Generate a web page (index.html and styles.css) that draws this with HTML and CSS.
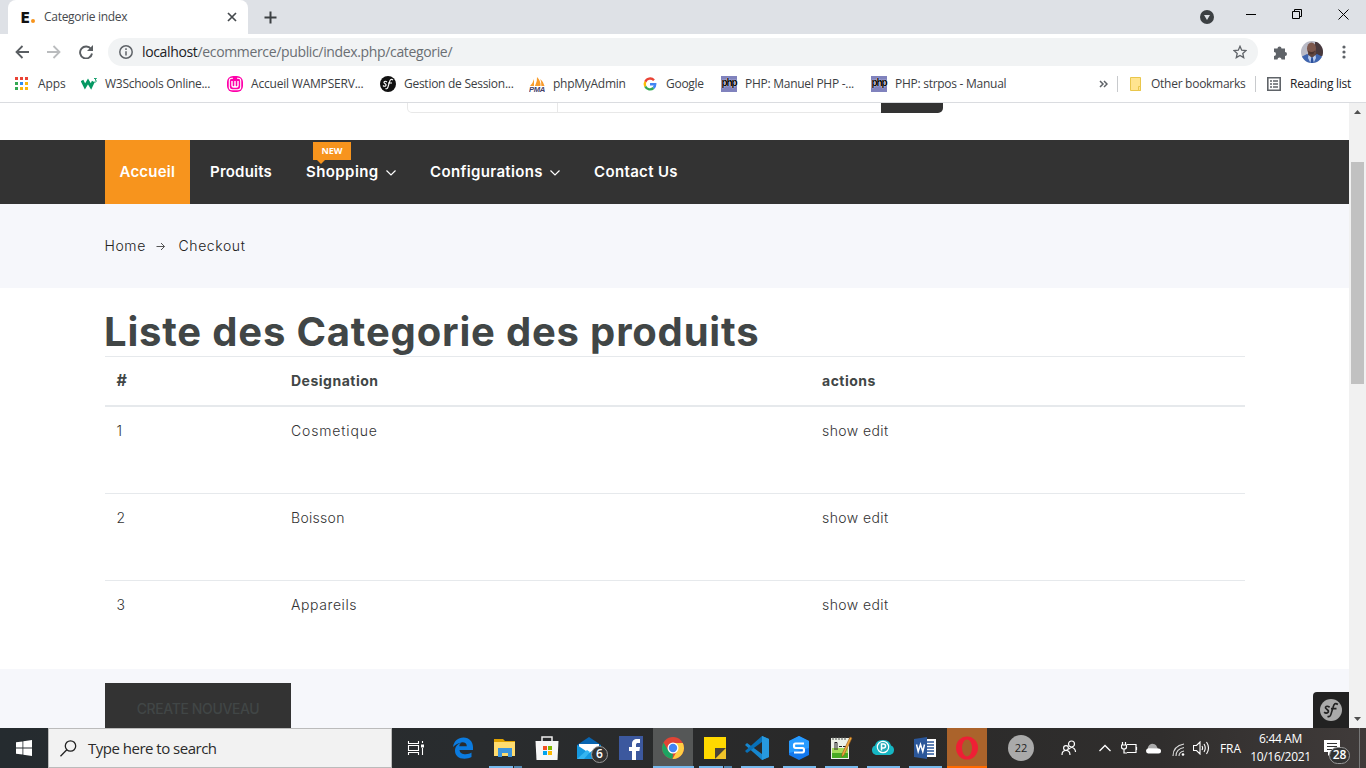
FILE: index.html
```
<!DOCTYPE html>
<html lang="fr">
<head>
<meta charset="utf-8">
<title>Categorie index</title>
<link rel="stylesheet" href="styles.css">
</head>
<body>
<header class="browser">
  <div class="tabstrip">
    <div class="tab">
      <span class="favicon">E<i></i></span><span class="tab-title">Categorie index</span>
      <svg class="tab-close" width="10" height="10" viewBox="0 0 10 10"><path d="M1 1l8 8M9 1L1 9" stroke="#45494d" stroke-width="1.7"/></svg>
    </div>
    <svg class="newtab" width="13" height="13" viewBox="0 0 13 13"><path d="M6.500 .5v12M.5 6.500h12" stroke="#3c4043" stroke-width="2"/></svg>
    <div class="window-controls">
      <svg width="14" height="14" viewBox="0 0 14 14"><circle cx="7" cy="7" r="7" fill="#3c4043"/><path d="M4 5h6L7 10z" fill="#dee1e6"/></svg>
      <svg class="min" width="10" height="10" viewBox="0 0 10 10"><path d="M0 5.500h10" stroke="#000"/></svg>
      <svg class="max" width="10" height="10" viewBox="0 0 10 10"><path d="M.5 2.500h7v7h-7zM2.500 2.500v-2h7v7h-2" stroke="#000" fill="none"/></svg>
      <svg class="close" width="11" height="11" viewBox="0 0 11 11"><path d="M.5 .5l10 10M10.500 .5l-10 10" stroke="#000"/></svg>
    </div>
  </div>
  <div class="toolbar">
    <svg width="14" height="14" viewBox="0 0 14 14"><path d="M14 7H1.500M7.500 1L1.500 7l6 6" stroke="#5a5e62" stroke-width="1.8" fill="none"/></svg>
    <svg width="14" height="14" viewBox="0 0 14 14"><path d="M0 7h12.500M6.500 1l6 6-6 6" stroke="#babcbe" stroke-width="1.800" fill="none"/></svg>
    <svg width="14" height="14" viewBox="0 0 14 14"><path d="M12 4A6 6 0 1 0 13 8.500" stroke="#5a5e62" stroke-width="1.900" fill="none"/><path d="M14 0v6H8z" fill="#5a5e62"/></svg>
    <div class="address">
      <svg width="14" height="14" viewBox="0 0 14 14"><circle cx="7" cy="7" r="6.200" fill="none" stroke="#5f6368" stroke-width="1.500"/><path d="M7 6.200v4.300M7 3.300v1.600" stroke="#5f6368" stroke-width="1.500"/></svg>
      <span class="url"><b>localhost</b>/ecommerce/public/index.php/categorie/</span>
      <svg class="star" width="14" height="14" viewBox="0 0 14 14"><path d="M7 1.300l1.700 3.900 4.300.4-3.200 2.800.9 4.200L7 10.400l-3.700 2.200.9-4.200L1 5.600l4.300-.4z" fill="none" stroke="#5f6368" stroke-width="1.300"/></svg>
    </div>
    <svg class="puzzle" width="15" height="15" viewBox="0 0 15 15"><path d="M1 3.500h3.500a2 2 0 1 1 4 0H12V7a2 2 0 1 1 0 4v3.500H8.500a2 2 0 0 0-4 0H1V11a2 2 0 0 0 0-4z" fill="#5f6368"/></svg>
    <svg class="avatar" width="22" height="22" viewBox="0 0 22 22"><defs><clipPath id="av"><circle cx="11" cy="11" r="11"/></clipPath></defs><g clip-path="url(#av)"><path d="M0 0h22v22H0z" fill="#b9bac6"/><path d="M14 1h8v14h-8z" fill="#48393d"/><path d="M0 16l6-3 5 2 5-2 6 3v6H0z" fill="#3f65af"/><path d="M7 11h8v3l-4 3-4-3z" fill="#60463f"/><ellipse cx="10.500" cy="7.500" rx="4.500" ry="6" fill="#7c574c"/><path d="M7 9.500q3.500 3 7 0-.5 4-3.500 4T7 9.500z" fill="#4b342f"/><path d="M7.500 14l3.500 3 3.500-3 .5 3-2.500 5h-3L7 17z" fill="#b9cbed"/><path d="M10.300 16.500h1.500l1 5.500H9.500z" fill="#294f9c"/></g></svg>
    <svg class="dots" width="4" height="14" viewBox="0 0 4 14"><g fill="#5f6368"><circle cx="2" cy="2" r="1.600"/><circle cx="2" cy="7" r="1.600"/><circle cx="2" cy="12" r="1.600"/></g></svg>
  </div>
  <nav class="bookmarks">
    <a class="bm bm-apps"><svg width="16" height="16" viewBox="0 0 16 16"><path d="M1 1h3v3H1zM6 1h3v3H6zM11 1h3v3h-3z" fill="#ea4335"/><path d="M1 6h3v3H1z" fill="#34a853"/><path d="M6 6h3v3H6z" fill="#2e8cf0"/><path d="M11 6h3v3h-3zM6 11h3v3H6zM11 11h3v3h-3z" fill="#fbb50b"/><path d="M1 11h3v3H1z" fill="#34a853"/></svg><span>Apps</span></a>
    <a class="bm bm-w3"><svg width="17" height="16" viewBox="0 0 17 16"><path d="M1 4.500l3 6 3-5 3 5 2.300-5" fill="none" stroke="#059862" stroke-width="3"/><path d="M13 2.500h2.500L14 4c2 0 2 2.500-.8 2" stroke="#059862" fill="none" stroke-width=".9"/></svg><span>W3Schools Online...</span></a>
    <a class="bm bm-wamp"><svg width="16" height="16" viewBox="0 0 16 16"><rect width="16" height="16" rx="6" fill="#f0a"/><path d="M6 2.300H5Q2.300 2.300 2.300 5v6q0 2.700 2.700 2.700h6q2.700 0 2.700-2.700V5Q13.700 2.300 11 2.300h-1" fill="none" stroke="#fff" stroke-width="1.100"/><path d="M5 5v4.500Q5 11 6.500 11T8 9.500V5v4.500Q8 11 9.500 11T11 9.500V5" fill="none" stroke="#fff" stroke-width="1.400"/></svg><span>Accueil WAMPSERV...</span></a>
    <a class="bm bm-sf"><svg width="16" height="16" viewBox="0 0 16 16"><circle cx="8" cy="8" r="8" fill="#111"/><path d="M7 6q-2-1.500-3 0c-.8 1.500 3 1.500 2 3.500q-1.500 1.500-3 0M13 4q-2.500-2-3.500 2L8 11q-.8 2.500-2.500 1.500M8 7h4" fill="none" stroke="#fff" stroke-width="1.100"/></svg><span>Gestion de Session...</span></a>
    <a class="bm bm-pma"><svg width="16" height="16" viewBox="0 0 16 16"><path d="M1 10Q4 7 5 3v7zM6 10Q8.500 5 8 1q4 4 3.500 9zM12.300 10q.3-4-1-7 3.500 3 4.200 7z" fill="#f89c2c"/><text x="0" y="15.500" class="pma" textLength="16" lengthAdjust="spacingAndGlyphs">PMA</text></svg><span>phpMyAdmin</span></a>
    <a class="bm bm-google"><svg width="16" height="16" viewBox="0 0 16 16"><g fill="none" stroke-width="2.400"><path d="M12 4.200A5.200 5.200 0 0 0 3.300 5.800" stroke="#ea4335"/><path d="M3.300 5.800a5.200 5.200 0 0 0 0 4.700" stroke="#fbbc05"/><path d="M3.300 10.500a5.200 5.200 0 0 0 8.200 1.500" stroke="#34a853"/><path d="M8 8.200h5.200a5.200 5.200 0 0 1-1.700 3.800" stroke="#4285f4"/></g></svg><span>Google</span></a>
    <a class="bm bm-php"><i class="php">php</i><span>PHP: Manuel PHP -...</span></a>
    <a class="bm bm-php2"><i class="php">php</i><span>PHP: strpos - Manual</span></a>
    <svg class="more" width="9" height="8" viewBox="0 0 9 8"><path d="M1 1l3 3-3 3M5 1l3 3-3 3" fill="none" stroke="#5f6368" stroke-width="1.500"/></svg>
    <i class="sep"></i>
    <a class="bm bm-other"><svg width="14" height="16" viewBox="0 0 14 16"><path d="M1.500 1.500h10v13h-10z" fill="#ffe48f" stroke="#e9c64b"/><path d="M9.500 10.500h2v4h-2z" fill="#ffe48f" stroke="#e9c64b"/></svg><span>Other bookmarks</span></a>
    <i class="sep"></i>
    <a class="bm bm-read"><svg width="14" height="14" viewBox="0 0 14 14"><path d="M.8 .8h12.400v12.400H.8z" fill="none" stroke="#5f6368" stroke-width="1.600"/><path d="M3 4h2M6 4h5M3 7h2M6 7h5M3 10h2M6 10h5" stroke="#5f6368" stroke-width="1.500"/></svg><span>Reading list</span></a>
  </nav>
</header>
<div class="viewport">
  <main class="page">
    <div class="searchrow"><div class="search"><div class="search-cat"></div><div class="search-input"></div><div class="search-btn"></div></div></div>
    <nav class="mainnav">
      <a class="active">Accueil</a>
      <a class="n-prod">Produits</a>
      <a class="n-shop">Shopping<svg width="12" height="8" viewBox="0 0 12 8"><path d="M1.500 1.500L6 6l4.500-4.500" fill="none" stroke="#fff" stroke-width="1.200"/></svg><em class="new">NEW</em></a>
      <a class="n-conf">Configurations<svg width="12" height="8" viewBox="0 0 12 8"><path d="M1.500 1.500L6 6l4.500-4.500" fill="none" stroke="#fff" stroke-width="1.200"/></svg></a>
      <a class="n-contact">Contact Us</a>
    </nav>
    <div class="breadcrumb"><span class="home">Home</span><svg width="10" height="9" viewBox="0 0 10 9"><path d="M.5 4.500h8M5 1l3.500 3.500L5 8" fill="none" stroke="#555" stroke-width="1"/></svg><span class="checkout">Checkout</span></div>
    <section class="content">
      <h1>Liste des Categorie des produits</h1>
      <table>
        <thead><tr><th class="c1"><span class="t-num">#</span></th><th class="c2">Designation</th><th>actions</th></tr></thead>
        <tbody>
          <tr><td>1</td><td><span class="t-cos">Cosmetique</span></td><td><a>show</a> <a>edit</a></td></tr>
          <tr><td>2</td><td><span class="t-boi">Boisson</span></td><td><a>show</a> <a>edit</a></td></tr>
          <tr><td>3</td><td><span class="t-app">Appareils</span></td><td><a>show</a> <a>edit</a></td></tr>
        </tbody>
      </table>
    </section>
    <div class="actions"><button class="create">CREATE NOUVEAU</button></div>
    <div class="sf-toolbar"><svg width="22" height="22" viewBox="0 0 16 16"><circle cx="8" cy="8" r="8" fill="#aaa"/><path d="M7 6q-2-1.500-3 0c-.8 1.500 3 1.500 2 3.500q-1.500 1.500-3 0M13 4q-2.500-2-3.500 2L8 11q-.8 2.500-2.500 1.500M8 7h4" fill="none" stroke="#222" stroke-width="1.200"/></svg></div>
  </main>
  <div class="scrollbar">
    <svg width="17" height="17" viewBox="0 0 17 17"><path d="M5 11l3.500-4 3.500 4z" fill="#505050"/></svg>
    <div class="thumb"></div>
    <svg width="17" height="17" viewBox="0 0 17 17"><path d="M5 6l3.500 4L12 6z" fill="#505050"/></svg>
  </div>
</div>
<footer class="taskbar">
  <div class="start"><svg width="16" height="16" viewBox="0 0 16 16"><path d="M0 2.300l6.500-.9v6.200H0zM7.300 1.300L16 0v7.600H7.300zM0 8.400h6.500v6.200L0 13.700zM7.300 8.400H16V16l-8.700-1.300z" fill="#fff"/></svg></div>
  <div class="tsearch"><svg width="17" height="17" viewBox="0 0 17 17"><circle cx="10.500" cy="6" r="5.200" fill="none" stroke="#222" stroke-width="1.300"/><path d="M6.800 9.800L.5 16.200" stroke="#222" stroke-width="1.300"/></svg><span>Type here to search</span></div>
  <div class="taskview"><svg width="17" height="16" viewBox="0 0 17 16"><path d="M1.500 1v2.500h10V1M1.500 5.500h10v5h-10zM1.500 15v-2.500h10V15M15.500 1v2M15.500 8v7" fill="none" stroke="#fff" stroke-width="1.100"/><path d="M14 4.500h3v3h-3z" fill="#fff"/></svg></div>
  <div class="app"><svg width="24" height="24" viewBox="0 0 24 24"><path d="M2 11C3 5 7 1.500 12.500 1.500 18.500 1.500 22 6 22 11v3H8.500c.3 3 3 4.200 6 4.200 2.500 0 4.600-.7 6-1.600v4.500c-2 1.100-4.500 1.700-7 1.700-6 0-9.500-3.500-9.500-8 0-4 2.500-6.600 6-8-1 1-1.500 2-1.700 3.400h7.500c0-2.600-1.600-4-4.500-4C7.500 7.200 4 8.600 2 11z" fill="#0b7bdf"/></svg></div>
  <div class="app run two"><svg width="24" height="24" viewBox="0 0 24 24"><path d="M1 3h9l2 2h10v5H1z" fill="#dfa100"/><path d="M1 6h21v14H1z" fill="#ffdc6e"/><path d="M5 21v-9h14v9h-4v-4H9v4z" fill="#3d95dc"/></svg></div>
  <div class="app"><svg width="24" height="26" viewBox="0 0 24 26"><path d="M7 7V2h10v5" fill="none" stroke="#eee" stroke-width="1.500"/><path d="M.5 6h23l-1 19H1.500z" fill="#f7f7f7"/><path d="M8 11h4v4H8z" fill="#f25022"/><path d="M13 11h4v4h-4z" fill="#7fba00"/><path d="M8 16h4v4H8z" fill="#00a4ef"/><path d="M13 16h4v4h-4z" fill="#ffb900"/></svg></div>
  <div class="app mail"><svg width="24" height="24" viewBox="0 0 24 24"><path d="M0 9L12 1l12 8v14H0z" fill="#0864b0"/><path d="M2 8h20v10H2z" fill="#fff"/><path d="M0 9l12 8 12-8v14H0z" fill="#1598df"/><path d="M0 23l10-9 3 2-6 7z" fill="#35b5f0"/></svg><b class="badge">6</b></div>
  <div class="app"><svg width="24" height="24" viewBox="0 0 24 24"><path d="M0 0h24v24H0z" fill="#3c589e"/><path d="M13 24v-9h-3v-4h3V8c0-3.500 2-5 5-5h3v4h-2c-1.300 0-2 .5-2 2v2h4l-.6 4H17v9z" fill="#fff"/></svg></div>
  <div class="app chrome"><svg width="24" height="24" viewBox="0 0 24 24"><circle cx="12" cy="12" r="11" fill="#e04435"/><path d="M2.500 6.500L7.500 15 12 18l-.5 5A11 11 0 0 1 2.500 6.500z" fill="#1da362"/><path d="M12 7h9.800A11 11 0 0 1 11.500 23L16.500 14z" fill="#ffce43"/><circle cx="12" cy="12" r="5.500" fill="#fff"/><circle cx="12" cy="12" r="4.200" fill="#4285f4"/></svg></div>
  <div class="app run two"><svg width="24" height="24" viewBox="0 0 24 24"><path d="M1 1h22v11l-11 11H1z" fill="#ffd900"/><path d="M12 12h11L12 23z" fill="#4a4438"/><path d="M23 12v11H12z" fill="#f0c329"/></svg></div>
  <div class="app run"><svg width="24" height="24" viewBox="0 0 24 24"><path d="M17 0l7 3v18l-7 3L0 9l2-2 15 11z" fill="#1787cf"/><path d="M17 0v6L2 17l-2-2z" fill="#0870b7"/><path d="M17 0l7 3v18l-7 3z" fill="#2799df"/></svg></div>
  <div class="app run"><svg width="24" height="24" viewBox="0 0 24 24"><path d="M12 0l10 5v14l-10 5-10-5V5z" fill="#1478ed"/><path d="M12 0l10 5v7L2 17V5z" fill="#279bff"/><path d="M17 7.500H8.500Q7 7.500 7 9.700T8.500 12h7q1.500 0 1.500 2.200t-1.500 2.300H7" fill="none" stroke="#fff" stroke-width="2.200"/></svg></div>
  <div class="app run"><svg width="24" height="24" viewBox="0 0 24 24"><path d="M2 2h18v21H2z" fill="#edf2e8"/><path d="M3 12h16v10H3z" fill="#a5dc5a"/><path d="M3 17h16v5H3z" fill="#48aa23"/><path d="M4 1v3M7 1v3M10 1v3M13 1v3M16 1v3" stroke="#555"/><path d="M6 6v8M6 6.500h2V14M10 10.500h3M14 10.500h3" stroke="#222" fill="none"/><path d="M21 1l2 1-8 17-2 2v-3z" fill="#efaa3c" stroke="#93541c" stroke-width=".6"/></svg></div>
  <div class="app run"><svg width="24" height="24" viewBox="0 0 24 24"><path d="M5 19a5 5 0 0 1-1-9.500C5 5 9 4 12 4s7 1 8 5.500A5 5 0 0 1 19 19z" fill="#16b6c3"/><circle cx="12" cy="11" r="5.700" fill="#24acb9" stroke="#fff" stroke-width="1.200"/><path d="M10.500 14.500V8h2q2 0 2 2t-2 2h-2" fill="none" stroke="#fff" stroke-width="1.500"/></svg></div>
  <div class="app run"><svg width="24" height="24" viewBox="0 0 24 24"><path d="M12 3h11v18H12z" fill="#fff"/><path d="M14 6h7M14 9h7M14 12h7M14 15h7M14 18h7" stroke="#2b579a" stroke-width="1.300"/><path d="M1 3l13-2v22L1 21z" fill="#2b579a"/><path d="M3.500 8.500l1.700 7 2.300-7 2.300 7 1.700-7" fill="none" stroke="#fff" stroke-width="1.500"/></svg></div>
  <div class="app opera"><svg width="24" height="24" viewBox="0 0 24 24"><ellipse cx="12" cy="12" rx="11" ry="11.500" fill="#ee1f35"/><ellipse cx="12" cy="12" rx="5" ry="8.500" fill="#a5602b"/></svg></div>
  <div class="tray">
    <b class="temp">22</b>
    <svg class="people" width="16" height="16" viewBox="0 0 16 16"><g fill="none" stroke="#fff" stroke-width="1.200"><circle cx="10.500" cy="4" r="3"/><circle cx="5" cy="8" r="2.400"/><path d="M1 15q0-4.500 4-4.500T9 15M8 9q3-3 5.500 0 1 1.300 1 3"/></g></svg>
    <svg class="chev" width="12" height="8" viewBox="0 0 12 8"><path d="M.5 7L6 1.500 11.500 7" fill="none" stroke="#fff" stroke-width="1.300"/></svg>
    <svg class="batt" width="17" height="12" viewBox="0 0 17 12"><path d="M6 2.500h9v8H6M15.500 5v3M1.500 0v3M4.500 0v3M.5 3h5v2q0 2-2.500 2T.5 5zM3 7v4h3" fill="none" stroke="#fff" stroke-width="1.200"/></svg>
    <svg class="cloud" width="17" height="11" viewBox="0 0 17 11"><path d="M3 7a4.500 4.500 0 0 1 9-3l2 4z" fill="#aaa"/><path d="M3 10.500a2.700 2.700 0 0 1 .5-5.300l10 .3a2.500 2.500 0 0 1 0 5z" fill="#fff"/></svg>
    <svg class="wifi" width="13" height="13" viewBox="0 0 13 13"><g fill="none" stroke="#ddd" stroke-width="1.100"><path d="M1 13Q1 3 12 1M4 13q0-7 8-8.500M7 13q0-4 5-5"/></g><circle cx="11" cy="11.500" r="1.300" fill="#fff"/></svg>
    <svg class="sound" width="17" height="14" viewBox="0 0 17 14"><path d="M.5 4.500h3l3.500-3.500v12L3.500 9.500h-3zM9 5q1.200 2 0 4M11 3q2.500 4 0 8M13.500 1q4 6 0 12" fill="none" stroke="#fff" stroke-width="1.100"/></svg>
    <span class="lang">FRA</span>
    <div class="clock"><span class="time">6:44 AM</span><span class="date">10/16/2021</span></div>
    <div class="notice"><svg width="17" height="16" viewBox="0 0 17 16"><path d="M0 0h16v12H8l-4 4v-4H0z" fill="#fff"/><path d="M3 3.500h10M3 6.500h10M3 9.500h6" stroke="#333"/></svg><b class="badge">28</b></div>
  </div>
</footer>
</body>
</html>
```
FILE: styles.css
```
* { box-sizing: border-box; }
body { margin: 0; width: 1366px; height: 768px; overflow: hidden; display: flex; flex-direction: column; font-family: "Open Sans", sans-serif; }
svg { display: block; flex: none; }
i, em { font-style: normal; }

/* Browser window */
.browser { height: 103px; border-bottom: 1px solid #dadce0; background: #fff; }
.tabstrip { height: 34px; background: #dee1e6; display: flex; align-items: center; }
.tab { width: 240px; height: 34px; margin-left: 8px; background: #fff; border-radius: 8px 8px 0 0; display: flex; align-items: center; padding: 0 11px 0 13px; font-size: 12px; color: #45494d; }
.favicon { width: 23px; font: 900 14px Inter, sans-serif; color: #111; display: flex; align-items: baseline; }
.favicon i { width: 4px; height: 4px; border-radius: 2px; background: #f7941d; margin-left: 1px; }
.tab-title { letter-spacing: -.28px; white-space: nowrap; padding-bottom: 2px; }
.tab-close { margin-left: auto; }
.newtab { margin-left: 16px; }
.window-controls { margin-left: auto; display: flex; align-items: center; padding-right: 17px; }
.window-controls .min { margin: -6px 0 0 32px; }
.window-controls .max { margin: -6px 0 0 36px; }
.window-controls .close { margin: -6px 0 0 36px; }
.toolbar { height: 36px; display: flex; align-items: center; padding-left: 15px; gap: 18px; }
.address { width: 1150px; height: 28px; margin-left: -3px; border-radius: 14px; background: #f1f3f4; display: flex; align-items: center; padding: 0 11px; }
.url { margin-left: 9px; padding-bottom: 2px; font-size: 14px; letter-spacing: -.35px; color: #6a6e73; white-space: nowrap; }
.url b { font-weight: 400; color: #202124; }
.star { margin-left: auto; }
.puzzle { margin-left: -3px; }
.avatar { margin-left: -5px; }
.dots { margin-left: 1px; }
.bookmarks { height: 28px; display: flex; align-items: center; padding-left: 14px; font-size: 12px; color: #3c4043; }
.bm { display: flex; align-items: center; gap: 8px; white-space: nowrap; flex: none; letter-spacing: -.27px; }
.bm span { padding-bottom: 2px; }
.bm-apps { width: 67px; }
.bm-apps span { letter-spacing: -.1px; }
.bm-w3 { width: 146px; gap: 7px; }
.bm-wamp { width: 153px; }
.bm-wamp span { letter-spacing: -.2px; }
.bm-sf { width: 149px; }
.bm-pma { width: 113px; }
.bm-google { width: 79px; }
.bm-php { width: 150px; }
.bm-php2 { width: 228px; }
.bm-other { margin-left: 11px; width: 126px; }
.bm-read { margin-left: 11px; gap: 9px; color: #202124; }
.sep { width: 1px; height: 16px; background: #c8cacd; flex: none; }
.more { margin-right: 9px; }
.pma { font: italic 700 6.500px "Liberation Sans", sans-serif; fill: #443f6a; }
.php { width: 16px; height: 16px; background: #8082bd; color: #000; font: 700 10px/14px "Liberation Sans", sans-serif; letter-spacing: -1.100px; text-align: center; text-shadow: 0 0 1px #fff, 0 0 1px #fff; }

/* Shop page */
.viewport { flex: 1; display: flex; min-height: 0; }
.page { flex: 1; position: relative; display: flex; flex-direction: column; background: #fff; color: #414646; font-family: Inter, sans-serif; overflow: hidden; }
.searchrow { height: 37px; padding-left: 407px; flex: none; }
.search { width: 536px; height: 10px; display: flex; }
.search > div { border-bottom: 1px solid #e8e8e8; }
.search .search-cat { width: 151px; border-left: 1px solid #e8e8e8; border-right: 1px solid #e8e8e8; border-bottom-left-radius: 5px; }
.search-input { flex: 1; }
.search .search-btn { width: 62px; background: #333; border: 0; border-bottom-right-radius: 5px; }
.mainnav { height: 64px; flex: none; background: #333; padding-left: 105px; display: flex; color: #fff; font-size: 15px; font-weight: 600; letter-spacing: .22px; }
.mainnav a { display: flex; align-items: center; position: relative; padding: 0 0 2px 15px; white-space: nowrap; }
.mainnav svg { margin: 3px 0 0 6px; }
.mainnav .active { width: 85px; background: #f7941d; margin-right: 5px; padding-left: 14.500px; }
.n-prod { width: 96px; }
.n-shop { width: 124px; letter-spacing: .42px; }
.n-conf { width: 164px; letter-spacing: .35px; }
.n-contact { letter-spacing: .35px; }
.new { position: absolute; left: 22px; top: 2px; width: 38px; height: 18px; background: #f7941d; font: 700 9px/18px "Open Sans", sans-serif; text-align: center; letter-spacing: -.1px; }
.new::after { content: ""; position: absolute; left: 4px; top: 18px; border: 4px solid transparent; border-top-color: #f7941d; border-bottom: 0; }
.breadcrumb { height: 84px; flex: none; background: #f6f7fb; padding-left: 104.500px; display: flex; align-items: center; font-size: 14px; font-weight: 300; letter-spacing: .6px; color: #222; }
.breadcrumb span { padding-bottom: 2px; }
.home { width: 51px; }
.checkout { margin-left: 13px; }
.content { height: 381px; flex: none; padding: 20px 0 0 105px; }
h1 { margin: 0 0 0 -1px; height: 48px; line-height: 48px; font-size: 40px; font-weight: 700; letter-spacing: .81px; white-space: nowrap; }
table { width: 1140px; table-layout: fixed; border-collapse: separate; border-spacing: 0; font-size: 14px; }
th, td { text-align: left; vertical-align: top; padding: 12px 12px 0 11.500px; line-height: 24px; border-top: 1px solid #e6e9ec; font-weight: 300; letter-spacing: .42px; }
th { height: 51px; font-weight: 700; letter-spacing: .5px; border-bottom: 2px solid #e6e9ec; }
td { height: 87px; color: #333; }
tbody tr:first-child td { height: 86px; border-top: 0; }
.c1 { width: 174.500px; }
.c2 { width: 531px; }
.t-num { font-size: 16px; line-height: 20px; }
.t-cos { letter-spacing: .85px; }
.t-boi { letter-spacing: .3px; }
.t-app { letter-spacing: .6px; }
.actions { flex: 1; background: #f6f7fb; padding: 14px 0 0 105px; }
.create { display: block; width: 186px; height: 51px; border: 0; padding: 0 0 1px; background: #333; color: #414646; font: 500 14px Inter, sans-serif; letter-spacing: -.38px; }
.sf-toolbar { position: absolute; right: 0; bottom: 0; width: 36px; height: 36px; background: #222; border-radius: 4px 0 0 0; display: grid; place-items: center; }
.scrollbar { width: 17px; background: #f1f1f1; display: flex; flex-direction: column; justify-content: space-between; }
.thumb { width: 13px; height: 222px; margin: 42px 0 auto 2px; background: #c1c1c1; }

/* Windows taskbar */
.taskbar { height: 40px; flex: none; display: flex; background: linear-gradient(90deg, #252b2f 0, #292c2e 35%, #292929 60%, #302e2d 85%, #403b3a); color: #fff; }
.start { width: 48px; display: grid; place-items: center; }
.tsearch { width: 344px; background: #f2f2f2; border: 1px solid #bbb; color: #2b2b2b; display: flex; align-items: center; padding-left: 11px; gap: 11px; font-size: 15px; letter-spacing: -.5px; }
.taskview { width: 50px; display: flex; align-items: center; padding-left: 15px; }
.app { width: 42px; display: grid; place-items: center; position: relative; }
.app.run::after, .chrome::after, .opera::after { content: ""; position: absolute; left: 5px; bottom: 0; width: 33px; height: 2px; background: #76b9ed; }
.app.two::after { background: linear-gradient(90deg, #76b9ed 24px, #222 24px, #222 25px, #5388b1 25px); }
.chrome { background: #555757; background-clip: padding-box; border-right: 1px solid transparent; margin-left: 1px; width: 41px; }
.chrome::after { left: 0; width: 41px; }
.opera { background: #ab632b; margin-left: 1px; width: 40px; }
.opera::after { left: 0; width: 40px; background: #ff6a00; }
.badge { position: absolute; border-radius: 9px; border: 1px solid #999; background: #333; font-weight: 600; line-height: 14px; text-align: center; }
.mail .badge { width: 17px; height: 17px; left: 23px; top: 18px; font-size: 12px; }
.tray { flex: 1; display: flex; align-items: center; }
.temp { width: 26px; height: 26px; margin-left: 21px; border-radius: 50%; background: #aaa; color: #222; font-size: 11px; font-weight: 400; line-height: 26px; text-align: center; }
.people { margin-left: 27px; }
.chev { margin-left: 22px; }
.batt { margin-left: 10px; }
.cloud { margin-left: 7px; }
.wifi { margin-left: 10px; margin-top: 3px; }
.sound { margin-left: 8px; }
.lang { margin-left: 10px; width: 22px; font-size: 12px; letter-spacing: -.1px; }
.clock { width: 77px; display: flex; flex-direction: column; align-items: center; font-size: 12px; line-height: 18px; letter-spacing: -.35px; }
.date { letter-spacing: -.3px; }
.notice { position: relative; margin-left: 5px; width: 36px; height: 40px; padding-top: 12px; border-right: 1px solid #777; }
.notice .badge { left: 5px; top: 19px; width: 21px; height: 17px; font-size: 12px; }
```
